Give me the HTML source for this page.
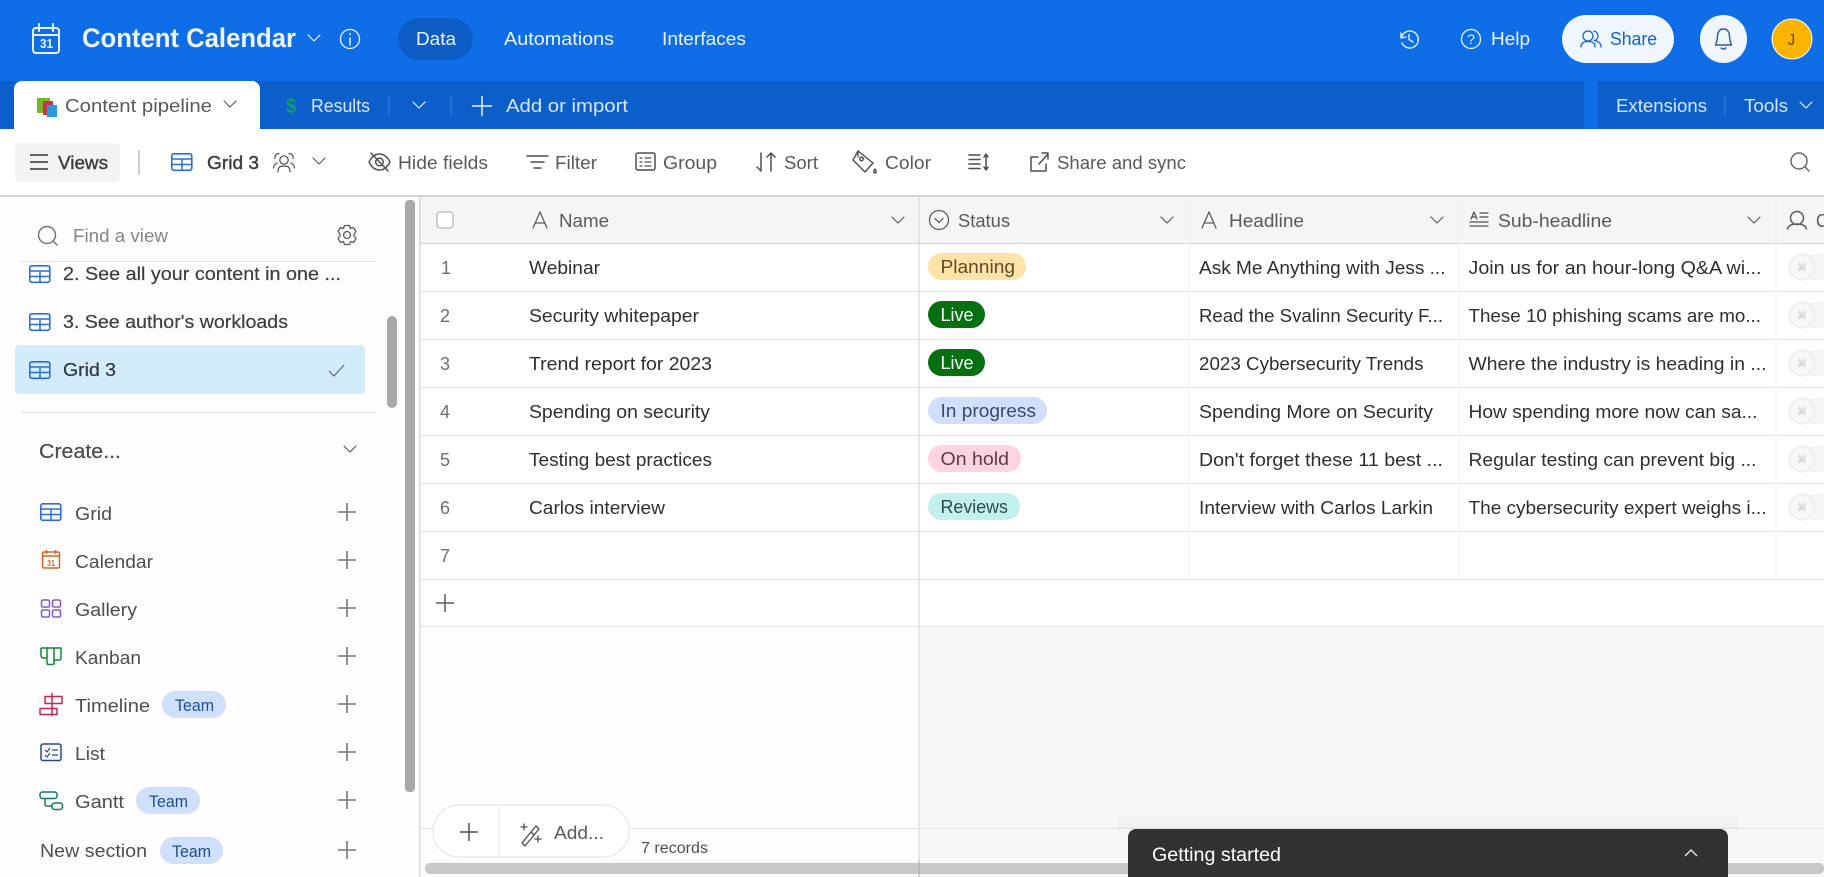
<!DOCTYPE html>
<html lang="en"><head><meta charset="utf-8"><title>Content Calendar</title>
<style>
html,body{margin:0;padding:0;background:#fff;width:1824px;height:877px;overflow:hidden}
svg{display:block}
text{font-family:"Liberation Sans",sans-serif;font-size:18.5px;fill:#4d4d52}
.w{fill:#eaf3ff}
.d{fill:#2f2f33;font-size:18.5px}
.g{fill:#59595e}
.n{fill:#6f6f74;font-size:18px}
.s{fill:none;stroke:#4d4d52;stroke-width:1.5;stroke-linecap:round;stroke-linejoin:round}
.sw{fill:none;stroke:#e8f2ff;stroke-width:1.5;stroke-linecap:round;stroke-linejoin:round}
.l{stroke:#e6e6e9;stroke-width:1.3}
.v{stroke:#efeff1;stroke-width:1}
</style></head><body>
<svg width="1824" height="877" viewBox="0 0 1824 877" xmlns="http://www.w3.org/2000/svg">
<defs>
<g id="grid"><rect x="0.8" y="0.8" width="20" height="16.5" rx="2" fill="none" stroke="#2a6fd0" stroke-width="1.6"/><path d="M1 6H21M1 11.5H21M11 6V17" fill="none" stroke="#2a6fd0" stroke-width="1.5"/></g>
<path id="plus" d="M-9 0H9M0-9V9" fill="none" stroke="#77777b" stroke-width="1.6"/>
<path id="chev" d="M-6-3L0 3L6-3" fill="none" stroke="#5c5c61" stroke-width="1.2" stroke-linecap="round" stroke-linejoin="round"/>
<path id="chw" d="M-6-3L0 3L6-3" fill="none" stroke="#e8f2ff" stroke-width="1.2" stroke-linecap="round" stroke-linejoin="round"/>
<g id="ax"><path d="M-7 8L0-8L7 8M-4.500 3H4.500" fill="none" stroke="#5c5c61" stroke-width="1.300" stroke-linecap="round" stroke-linejoin="round"/></g>
<g id="cx"><rect x="0" y="-13" width="60" height="26" rx="13" fill="#f5f5f6"/><circle cx="0" cy="0" r="12.500" fill="#f8f8f8" stroke="#f0f0f1" stroke-width="2.500"/><path d="M-3.500-3.500L3.500 3.500M3.500-3.500L-3.500 3.500" stroke="#dcdcde" stroke-width="3"/></g>
<linearGradient id="sh" x1="0" y1="0" x2="0" y2="1"><stop offset="0" stop-color="#000" stop-opacity="0"/><stop offset="1" stop-color="#000" stop-opacity=".035"/></linearGradient>
</defs>

<!-- top bar -->
<rect width="1824" height="129" fill="#0f6de8"/>
<rect y="81" width="1584" height="48" fill="#0c5fcb"/>
<rect x="1598" y="81" width="226" height="48" fill="#0c5fcb"/>
<!-- base icon -->
<g class="sw" style="stroke-width:2"><rect x="33" y="28" width="26" height="25" rx="3"/><path d="M33 35H59M39 24V31M53 24V31"/></g>
<text x="40" y="48" textLength="13" lengthAdjust="spacingAndGlyphs" style="font-size:13px;font-weight:700;fill:#eaf3ff">31</text>
<text x="82" y="47" textLength="214" lengthAdjust="spacingAndGlyphs" style="font-size:27px;font-weight:700;fill:#eff6ff">Content Calendar</text>
<use href="#chw" x="314" y="38"/>
<circle cx="350" cy="39" r="9.500" class="sw" style="stroke-width:1.300"/><path d="M350 38V45M350 33.500V34.500" class="sw" style="stroke-width:1.500"/>
<rect x="398" y="18" width="75" height="42" rx="21" fill="#0c5cc4"/>
<text x="416" y="45" textLength="40" lengthAdjust="spacingAndGlyphs" class="w">Data</text>
<text x="504" y="45" textLength="110" lengthAdjust="spacingAndGlyphs" class="w">Automations</text>
<text x="662" y="45" textLength="84" lengthAdjust="spacingAndGlyphs" class="w">Interfaces</text>
<path d="M1401 33L1401 38L1406 37M1401.500 37.500A8.500 8.500 0 1 1 1402 43M1409 34.500V39.500L1413 42" class="sw" style="stroke-width:1.400"/>
<circle cx="1471" cy="39" r="9.500" class="sw" style="stroke-width:1.300"/>
<text x="1467" y="44" textLength="8" lengthAdjust="spacingAndGlyphs" style="font-size:14px;fill:#e8f2ff">?</text>
<text x="1491" y="45" textLength="39" lengthAdjust="spacingAndGlyphs" class="w">Help</text>
<rect x="1562" y="15" width="112" height="48" rx="24" fill="#eff6fe"/>
<g fill="none" stroke="#0f62d0" stroke-width="1.300" stroke-linecap="round"><circle cx="1588" cy="36" r="5"/><path d="M1581 47C1581 43 1584 41.500 1588 41.500C1592 41.500 1595 43 1595 47M1594 31A5 5 0 0 1 1595 40.500C1598 41 1601 43 1601 47"/></g>
<text x="1610" y="45" textLength="47" lengthAdjust="spacingAndGlyphs" style="fill:#0f62d0">Share</text>
<rect x="1700" y="15" width="47" height="48" rx="23.500" fill="#eff6fe"/>
<path d="M1723.500 29C1719 29 1717.500 33 1717.500 36C1717.500 41 1716 43 1715.500 45H1731.500C1731 43 1729.500 41 1729.500 36C1729.500 33 1728 29 1723.500 29ZM1721 47.500C1722 49.500 1725 49.500 1726 47.500" fill="none" stroke="#2c5aa0" stroke-width="1.400" stroke-linejoin="round"/>
<circle cx="1792" cy="39" r="20" fill="#fcb400" stroke="#fff" stroke-width="1"/>
<text x="1788" y="45" textLength="7" lengthAdjust="spacingAndGlyphs" style="font-size:16px;fill:#5b4200">J</text>

<!-- tabs -->
<path d="M14 129V89A8 8 0 0 1 22 81H252A8 8 0 0 1 260 89V129Z" fill="#fff"/>
<rect x="37" y="98" width="13" height="15" fill="#7bb52b"/><rect x="43" y="101" width="10" height="14" fill="#c4374a"/><rect x="47" y="105" width="10" height="12" fill="#2a9ae0"/>
<text x="65" y="112" textLength="147" lengthAdjust="spacingAndGlyphs" class="g">Content pipeline</text>
<use href="#chev" x="230" y="104"/>
<text x="286" y="113" textLength="10" lengthAdjust="spacingAndGlyphs" style="font-size:21px;font-weight:700;fill:#0c9f73">$</text>
<text x="311" y="112" textLength="59" lengthAdjust="spacingAndGlyphs" class="w" style="fill:#d4e6ff">Results</text>
<path d="M389 96V115M451 96V115" stroke="#3a80da" stroke-width="1"/>
<use href="#chw" x="419" y="105"/>
<path d="M472.500 106H491.500M482 96.500V115.500" class="sw"/>
<text x="506" y="112" textLength="122" lengthAdjust="spacingAndGlyphs" class="w" style="fill:#d4e6ff">Add or import</text>
<text x="1616" y="112" textLength="91" lengthAdjust="spacingAndGlyphs" class="w" style="fill:#d4e6ff">Extensions</text>
<path d="M1725 96V115" stroke="#3a80da" stroke-width="1"/>
<text x="1744" y="112" textLength="44" lengthAdjust="spacingAndGlyphs" class="w" style="fill:#d4e6ff">Tools</text>
<use href="#chw" x="1806" y="105"/>

<!-- toolbar -->
<rect y="129" width="1824" height="66" fill="#fff"/>
<rect y="195" width="1824" height="2" fill="#d2d2d4"/>
<rect x="15" y="143" width="105" height="39" rx="4" fill="#f3f2f4"/>
<path d="M30 155H48M30 162H48M30 169H48" stroke="#4d4d52" stroke-width="1.800"/>
<text x="58" y="169" textLength="50" lengthAdjust="spacingAndGlyphs" style="fill:#3d3d42;stroke:#3d3d42;stroke-width:.4">Views</text>
<path d="M139 150V175" stroke="#bdbdc0" stroke-width="1.500"/>
<use href="#grid" x="171" y="153"/>
<text x="207" y="169" textLength="52" lengthAdjust="spacingAndGlyphs" style="fill:#3d3d42;stroke:#3d3d42;stroke-width:.45">Grid 3</text>
<g class="s" style="stroke-width:1.200"><circle cx="284" cy="160" r="4.200"/><path d="M278 172C278 167 280 166 284 166C288 166 290 167 290 172M279 153.500A4 4 0 0 0 275 158.500M277 163C275 164 273.500 165 273.500 168M289 153.500A4 4 0 0 1 293 158.500M291 163C293 164 294.500 165 294.500 168"/></g>
<use href="#chev" x="319" y="161"/>
<g class="s" style="stroke-width:1.400"><path d="M369 162C372 156 376 154 379.500 154C383 154 387 156 390 162C387 168 383 170 379.500 170C376 170 372 168 369 162Z"/><circle cx="379.500" cy="162" r="3.800"/><path d="M371 153L388 171"/></g>
<text x="398" y="169" textLength="90" lengthAdjust="spacingAndGlyphs" class="g">Hide fields</text>
<path d="M527 156H548M531 162H544M534 168H541" class="s"/>
<text x="555" y="169" textLength="42" lengthAdjust="spacingAndGlyphs" class="g">Filter</text>
<rect x="636" y="153" width="19" height="17" rx="2" class="s"/><path d="M640 158H642M640 162H642M640 166H642M645 158H651M645 162H651M645 166H651" class="s" style="stroke-width:1.200"/>
<text x="663" y="169" textLength="54" lengthAdjust="spacingAndGlyphs" class="g">Group</text>
<path d="M761 153V171M757 167L761 171M771 171V153M767 157L771 153L775 157" class="s"/>
<text x="784" y="169" textLength="34" lengthAdjust="spacingAndGlyphs" class="g">Sort</text>
<g class="s" style="stroke-width:1.400"><path d="M858 151L873 163L865 172L853 160Z"/><circle cx="861.500" cy="159" r="1.800"/><path d="M858 151V157M875 169C873.500 171 873.500 173 875 173C876.500 173 876.500 171 875 169Z"/></g>
<text x="885" y="169" textLength="46" lengthAdjust="spacingAndGlyphs" class="g">Color</text>
<path d="M969 155H980M969 159.500H980M969 164H980M969 168.500H980M986 154V170M984 157L986 154L988 157M984 167L986 170L988 167" class="s"/>
<path d="M1038 157H1031V171H1046V164M1039 164L1048 154M1042 153H1048V159" class="s"/>
<text x="1057" y="169" textLength="129" lengthAdjust="spacingAndGlyphs" class="g">Share and sync</text>
<circle cx="1799" cy="161" r="8" class="s" style="stroke:#66666b"/><path d="M1805 167L1809 171" class="s" style="stroke:#66666b"/>

<!-- sidebar -->
<rect y="197" width="420" height="680" fill="#fffdff"/>
<rect x="419" y="197" width="1.500" height="680" fill="#d8d8da"/>
<circle cx="47" cy="235" r="8.500" class="s" style="stroke:#76767a"/><path d="M53 241L57 245" class="s" style="stroke:#76767a"/>
<text x="73" y="242" textLength="95" lengthAdjust="spacingAndGlyphs" style="fill:#85858a">Find a view</text>
<g class="s" style="stroke:#5c5c61;stroke-width:1.300"><circle cx="347" cy="235" r="3.500"/><path d="M344.500 225.500H349.500L350.500 228.500L353.500 227.500L356 231.500L354 234V236L356 238.500L353.500 242.500L350.500 241.500L349.500 244.500H344.500L343.500 241.500L340.500 242.500L338 238.500L340 236V234L338 231.500L340.500 227.500L343.500 228.500Z"/></g>
<path d="M21 261.500H377" class="l"/>
<use href="#grid" x="29" y="265"/>
<text x="63" y="280" textLength="278" lengthAdjust="spacingAndGlyphs" style="fill:#3d3d42;stroke:#3d3d42;stroke-width:.2">2. See all your content in one ...</text>
<use href="#grid" x="29" y="313"/>
<text x="63" y="328" textLength="225" lengthAdjust="spacingAndGlyphs" style="fill:#3d3d42;stroke:#3d3d42;stroke-width:.2">3. See author's workloads</text>
<rect x="15" y="345" width="350" height="49" rx="4" fill="#d2ecfc"/>
<use href="#grid" x="29" y="361"/>
<text x="63" y="376" textLength="53" lengthAdjust="spacingAndGlyphs" style="fill:#32353d;stroke:#32353d;stroke-width:.2">Grid 3</text>
<path d="M329 371L334 376L344 365" fill="none" stroke="#66666b" stroke-width="1.200"/>
<path d="M21 412.500H377" class="l"/>
<text x="39" y="458" textLength="82" lengthAdjust="spacingAndGlyphs" style="font-size:20px;fill:#4a4a4f;stroke:#4a4a4f;stroke-width:.2">Create...</text>
<use href="#chev" x="350" y="449"/>
<use href="#plus" x="347" y="512"/><use href="#plus" x="347" y="560"/><use href="#plus" x="347" y="608"/><use href="#plus" x="347" y="656"/><use href="#plus" x="347" y="704"/><use href="#plus" x="347" y="752"/><use href="#plus" x="347" y="800"/><use href="#plus" x="347" y="850"/>
<use href="#grid" x="40" y="503"/>
<text x="75" y="520" textLength="37" lengthAdjust="spacingAndGlyphs">Grid</text>
<g fill="none" stroke="#d9641e" stroke-width="1.500"><rect x="42.500" y="552" width="17" height="16" rx="1.500"/><path d="M42.500 556H59.500M46.500 550V554M55.500 550V554"/></g>
<text x="47" y="566" textLength="8" lengthAdjust="spacingAndGlyphs" style="font-size:8px;font-weight:700;fill:#d9641e">31</text>
<text x="75" y="568" textLength="78" lengthAdjust="spacingAndGlyphs">Calendar</text>
<g fill="none" stroke="#7c5bd6" stroke-width="1.500"><rect x="41.500" y="600" width="8" height="7" rx="1.500"/><rect x="52.500" y="600" width="8" height="7" rx="1.500"/><rect x="41.500" y="610" width="8" height="7" rx="1.500"/><rect x="52.500" y="610" width="8" height="7" rx="1.500"/></g>
<text x="75" y="616" textLength="62" lengthAdjust="spacingAndGlyphs">Gallery</text>
<path d="M41 648H61V658C61 660 60 660 58 660H54M41 648V655C41 657 42 658 44 658H47M47 648V663C47 664 48 664.500 49 664.500H52C53 664.500 54 664 54 663V648" fill="none" stroke="#0d8a2f" stroke-width="1.500"/>
<text x="75" y="664" textLength="66" lengthAdjust="spacingAndGlyphs">Kanban</text>
<path d="M52 693V716M52 696.500H62V703.500H45V696.500H52M40 708.500H57V714.500H40Z" fill="none" stroke="#c8264f" stroke-width="1.500" stroke-linejoin="round"/>
<text x="75" y="712" textLength="75" lengthAdjust="spacingAndGlyphs">Timeline</text>
<rect x="162" y="691" width="64" height="27" rx="13.500" fill="#cfe0fd"/>
<text x="175" y="711" textLength="39" lengthAdjust="spacingAndGlyphs" style="font-size:16.500px;fill:#1f4a9c">Team</text>
<rect x="41" y="744" width="20" height="16.500" rx="2" fill="none" stroke="#1f4a9c" stroke-width="1.500"/>
<path d="M45 750L47 752L50 748M45 755L47 757L50 753M52 750H58M52 755H58" fill="none" stroke="#1f4a9c" stroke-width="1.200"/>
<text x="75" y="760" textLength="30" lengthAdjust="spacingAndGlyphs">List</text>
<rect x="40" y="792" width="17" height="6.500" rx="2.500" fill="none" stroke="#117a65" stroke-width="1.500"/><rect x="52" y="803" width="10.500" height="6.500" rx="2.500" fill="none" stroke="#117a65" stroke-width="1.500"/><path d="M45 798.500V804C45 805.500 46 806 47 806H52" fill="none" stroke="#117a65" stroke-width="1.500"/>
<text x="75" y="808" textLength="49" lengthAdjust="spacingAndGlyphs">Gantt</text>
<rect x="136" y="787" width="64" height="27" rx="13.500" fill="#cfe0fd"/>
<text x="149" y="807" textLength="39" lengthAdjust="spacingAndGlyphs" style="font-size:16.500px;fill:#1f4a9c">Team</text>
<text x="40" y="857" textLength="107" lengthAdjust="spacingAndGlyphs">New section</text>
<rect x="160" y="837" width="63" height="27" rx="13.500" fill="#cfe0fd"/>
<text x="172" y="857" textLength="39" lengthAdjust="spacingAndGlyphs" style="font-size:16.500px;fill:#1f4a9c">Team</text>
<rect x="405" y="200" width="10" height="592" rx="4" fill="#a9a8ab"/>
<rect x="387" y="316" width="10" height="92" rx="5" fill="#a9a8ab"/>

<!-- grid -->
<rect x="420.500" y="197" width="499" height="680" fill="#fdfcfe"/>
<rect x="920" y="197" width="904" height="680" fill="#f7f6f8"/>
<rect x="420.500" y="197" width="1404" height="46" fill="#f5f4f6"/>
<rect x="420.500" y="243" width="1404" height="383" fill="#fff"/>
<path d="M420 243.500H1824" stroke="#d8d8db" stroke-width="1.300"/>
<path d="M420 291.500H1824M420 339.500H1824M420 387.500H1824M420 435.500H1824M420 483.500H1824M420 531.500H1824M420 579.500H1824M420 626.500H1824M420 828.500H1824" class="l"/>
<path d="M919 197V877" stroke="#d2d2d5" stroke-width="1"/>
<path d="M1189 200V576M1459 200V576M1776 200V576" class="v"/>

<rect x="437" y="212" width="16" height="16" rx="3" fill="#fff" stroke="#b5b5b8" stroke-width="1.200"/>
<use href="#ax" x="540" y="220"/>
<text x="559" y="227" textLength="50" lengthAdjust="spacingAndGlyphs" class="g">Name</text>
<use href="#chev" x="898" y="220"/>
<circle cx="939" cy="220" r="9.500" class="s" style="stroke:#5c5c61;stroke-width:1.300"/><path d="M935 218.500L939 222.500L943 218.500" class="s" style="stroke-width:1.200"/>
<text x="958" y="227" textLength="52" lengthAdjust="spacingAndGlyphs" class="g">Status</text>
<use href="#chev" x="1167" y="220"/>
<use href="#ax" x="1209" y="220"/>
<text x="1229" y="227" textLength="75" lengthAdjust="spacingAndGlyphs" class="g">Headline</text>
<use href="#chev" x="1437" y="220"/>
<path d="M1471 219L1474 212L1477 219M1472 217H1476M1480 213H1488M1480 217H1488M1470 222H1488M1470 226H1488" class="s" style="stroke-width:1.200"/>
<text x="1498" y="227" textLength="114" lengthAdjust="spacingAndGlyphs" class="g">Sub-headline</text>
<use href="#chev" x="1754" y="220"/>
<circle cx="1797" cy="218" r="6.500" class="s" style="stroke:#5c5c61;stroke-width:1.500"/><path d="M1787.500 229C1788.500 225 1792 224 1797 224C1802 224 1805.500 225 1806.500 229" class="s" style="stroke:#5c5c61;stroke-width:1.500"/>
<text x="1816" y="227" textLength="12" lengthAdjust="spacingAndGlyphs" class="g">C</text>

<!-- rows -->
<text x="441" y="274" class="n">1</text><text x="440" y="322" class="n">2</text><text x="440" y="370" class="n">3</text><text x="440" y="418" class="n">4</text><text x="440" y="466" class="n">5</text><text x="440" y="514" class="n">6</text><text x="440" y="562" class="n">7</text>
<path d="M436 603H454M445 594V612" fill="none" stroke="#5c5c61" stroke-width="1.500"/>

<text x="529" y="274" textLength="71" lengthAdjust="spacingAndGlyphs" class="d">Webinar</text>
<text x="529" y="322" textLength="170" lengthAdjust="spacingAndGlyphs" class="d">Security whitepaper</text>
<text x="529" y="370" textLength="183" lengthAdjust="spacingAndGlyphs" class="d">Trend report for 2023</text>
<text x="529" y="418" textLength="181" lengthAdjust="spacingAndGlyphs" class="d">Spending on security</text>
<text x="529" y="466" textLength="183" lengthAdjust="spacingAndGlyphs" class="d">Testing best practices</text>
<text x="529" y="514" textLength="136" lengthAdjust="spacingAndGlyphs" class="d">Carlos interview</text>

<rect x="928" y="253" width="98" height="27" rx="13.500" fill="#ffe2a8"/>
<text x="940.500" y="273" textLength="74.500" lengthAdjust="spacingAndGlyphs" style="fill:#5a4a25">Planning</text>
<rect x="928" y="301" width="57" height="27" rx="13.500" fill="#066f10"/>
<text x="940.500" y="321" textLength="33" lengthAdjust="spacingAndGlyphs" style="fill:#fff">Live</text>
<rect x="928" y="349" width="57" height="27" rx="13.500" fill="#066f10"/>
<text x="940.500" y="369" textLength="33" lengthAdjust="spacingAndGlyphs" style="fill:#fff">Live</text>
<rect x="928" y="397" width="119" height="27" rx="13.500" fill="#cfdffc"/>
<text x="940.500" y="417" textLength="95.500" lengthAdjust="spacingAndGlyphs" style="fill:#3c4a66">In progress</text>
<rect x="928" y="445" width="93" height="27" rx="13.500" fill="#ffd4e0"/>
<text x="940.500" y="465" textLength="68.500" lengthAdjust="spacingAndGlyphs" style="fill:#5c3a45">On hold</text>
<rect x="928" y="493" width="92" height="27" rx="13.500" fill="#c2f0ec"/>
<text x="940.500" y="513" textLength="67.500" lengthAdjust="spacingAndGlyphs" style="fill:#2c4d4a">Reviews</text>

<text x="1199" y="274" textLength="246.500" lengthAdjust="spacingAndGlyphs" class="d">Ask Me Anything with Jess ...</text>
<text x="1199" y="322" textLength="244" lengthAdjust="spacingAndGlyphs" class="d">Read the Svalinn Security F...</text>
<text x="1199" y="370" textLength="224.500" lengthAdjust="spacingAndGlyphs" class="d">2023 Cybersecurity Trends</text>
<text x="1199" y="418" textLength="234" lengthAdjust="spacingAndGlyphs" class="d">Spending More on Security</text>
<text x="1199" y="466" textLength="244" lengthAdjust="spacingAndGlyphs" class="d">Don't forget these 11 best ...</text>
<text x="1199" y="514" textLength="234" lengthAdjust="spacingAndGlyphs" class="d">Interview with Carlos Larkin</text>

<text x="1468.500" y="274" textLength="293" lengthAdjust="spacingAndGlyphs" class="d">Join us for an hour-long Q&amp;A wi...</text>
<text x="1468.500" y="322" textLength="292.500" lengthAdjust="spacingAndGlyphs" class="d">These 10 phishing scams are mo...</text>
<text x="1468.500" y="370" textLength="298" lengthAdjust="spacingAndGlyphs" class="d">Where the industry is heading in ...</text>
<text x="1468.500" y="418" textLength="289" lengthAdjust="spacingAndGlyphs" class="d">How spending more now can sa...</text>
<text x="1468.500" y="466" textLength="288" lengthAdjust="spacingAndGlyphs" class="d">Regular testing can prevent big ...</text>
<text x="1468.500" y="514" textLength="298" lengthAdjust="spacingAndGlyphs" class="d">The cybersecurity expert weighs i...</text>

<use href="#cx" x="1802" y="267"/><use href="#cx" x="1802" y="315"/><use href="#cx" x="1802" y="363"/><use href="#cx" x="1802" y="411"/><use href="#cx" x="1802" y="459"/><use href="#cx" x="1802" y="507"/>

<!-- footer -->
<rect x="425" y="863" width="1399" height="11" rx="5" fill="#c8c7ca"/>
<path d="M919 860V877" stroke="#a9a9ac" stroke-width="1"/>
<rect x="433" y="805" width="196" height="52" rx="26" fill="#fff" stroke="#e8e8ea" stroke-width="1.200"/>
<path d="M499 806V856" stroke="#e8e8ea" stroke-width="1.200"/>
<path d="M460 832H478M469 823V841" fill="none" stroke="#4d4d52" stroke-width="1.500"/>
<g class="s" style="stroke-width:1.300"><path d="M522 843L536 826L539 829L525 846Z M531 832L534 835"/><path d="M524 824V830M521 827H527M538 836V842M535 839H541"/></g>
<text x="554" y="839" textLength="50" lengthAdjust="spacingAndGlyphs" class="g">Add...</text>
<text x="641" y="853" textLength="67" lengthAdjust="spacingAndGlyphs" style="font-size:16px;fill:#4d4d52">7 records</text>
<rect x="1118" y="810" width="620" height="19" fill="url(#sh)"/>
<path d="M1128 877V837A8 8 0 0 1 1136 829H1720A8 8 0 0 1 1728 837V877Z" fill="#333134"/>
<text x="1152" y="861" textLength="129" lengthAdjust="spacingAndGlyphs" style="font-size:19px;fill:#fff">Getting started</text>
<path d="M1685 856L1691 850L1697 856" fill="none" stroke="#e6e6e6" stroke-width="1.400"/>
</svg>
</body></html>
